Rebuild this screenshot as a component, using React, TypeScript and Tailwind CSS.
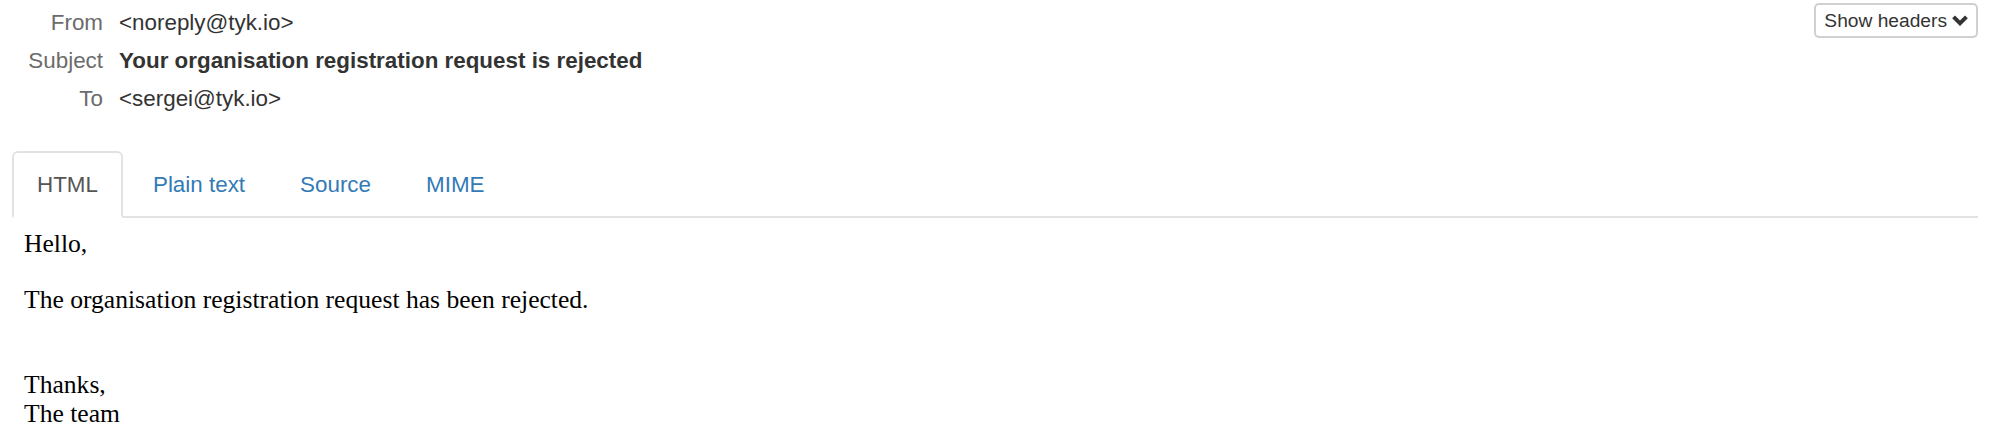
import React from "react";

const headers = [
  { label: "From", value: "<noreply@tyk.io>", bold: false },
  { label: "Subject", value: "Your organisation registration request is rejected", bold: true },
  { label: "To", value: "<sergei@tyk.io>", bold: false },
];

const tabs = ["HTML", "Plain text", "Source", "MIME"];

function ChevronDown() {
  return (
    <svg width="16" height="12" viewBox="0 0 16 12" className="ml-[5px] inline-block">
      <path d="M0.2 3.2 L3 0.4 L8 5.4 L13 0.4 L15.8 3.2 L8 11 Z" fill="#333" />
    </svg>
  );
}

export default function App() {
  return (
    <div className="min-h-[443px] bg-white pl-[12px] pr-[22px] font-['Liberation_Sans',Arial,sans-serif]">
      <div className="flex items-start justify-between">
        <div className="pt-[4px]">
          {headers.map((h) => (
            <div key={h.label} className="flex h-[38px] items-center text-[22.4px] leading-[38px]">
              <div className="w-[91px] text-right text-[#6b6b6b]">{h.label}</div>
              <div className={"ml-[16px] text-[#333] " + (h.bold ? "font-bold" : "")}>{h.value}</div>
            </div>
          ))}
        </div>
        <button className="mt-[3px] flex items-center rounded-[5px] border-2 border-[#d0d0d0] bg-white px-[8px] py-[1px] text-[19.2px] leading-[29px] text-[#333]">
          Show headers
          <ChevronDown />
        </button>
      </div>

      <ul className="mt-[33px] flex border-b-2 border-[#e2e2e2]">
        {tabs.map((t, i) => (
          <li key={t} className="-mb-[2px] mr-[5px]">
            <a
              className={
                "block rounded-t-[6px] border-2 px-[23px] pb-[15px] pt-[16px] text-[22.4px] leading-[32px] " +
                (i === 0
                  ? "border-[#e2e2e2] border-b-white bg-white text-[#555]"
                  : "border-transparent text-[#337ab7]")
              }
            >
              {t}
            </a>
          </li>
        ))}
      </ul>

      <div className="px-[12px] pt-[11px] font-['Liberation_Serif','Times_New_Roman',serif] text-[25.6px] leading-[29.4px] text-black">
        <p>Hello,</p>
        <p className="mt-[26.6px]">The organisation registration request has been rejected.</p>
        <p className="mt-[55.6px]">Thanks,</p>
        <p>The team</p>
      </div>
    </div>
  );
}
